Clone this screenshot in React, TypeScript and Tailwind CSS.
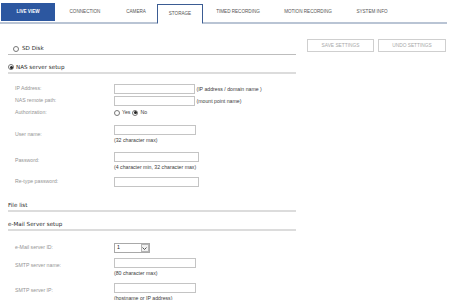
import React from 'react'

const tabs = [
  { label: 'LIVE VIEW', w: 'w-[54px]' },
  { label: 'CONNECTION', w: 'w-[60px]' },
  { label: 'CAMERA', w: 'w-[42px]' },
  { label: 'STORAGE', w: 'w-[46px]' },
  { label: 'TIMED RECORDING', w: 'w-[70px]' },
  { label: 'MOTION RECORDING', w: 'w-[70px]' },
  { label: 'SYSTEM INFO', w: 'w-[58px]' },
]

function Radio({ checked }: { checked?: boolean }) {
  return (
    <span className="inline-flex w-[6px] h-[6px] rounded-full border border-[#777] bg-white items-center justify-center shrink-0">
      {checked && <span className="w-[3px] h-[3px] rounded-full bg-[#222]" />}
    </span>
  )
}

function Input({ w = 'w-[81px]' }: { w?: string }) {
  return <div className={`${w} h-[10px] border border-[#c4c4c4] bg-white shrink-0`} />
}

function Label({ children }: { children: React.ReactNode }) {
  return <div className="w-[99px] shrink-0 text-[5.2px] text-[#959595]">{children}</div>
}

function Note({ children }: { children: React.ReactNode }) {
  return <div className="text-[5.2px] leading-[7px] text-[#3c3c3c] whitespace-nowrap">{children}</div>
}

function SectionHead({ children, thick }: { children: React.ReactNode; thick?: boolean }) {
  return (
    <div
      className={`flex items-center gap-[2px] h-[12px] text-[5.6px] font-['DejaVu_Sans',Verdana,sans-serif] text-[#2a2a2a] ${
        thick ? 'border-b-2 border-[#dcdcdc]' : 'border-b border-[#bdbdbd]'
      }`}
    >
      {children}
    </div>
  )
}

export default function App() {
  return (
    <div className="w-[450px] h-[300px] overflow-hidden bg-white font-['Liberation_Sans',Arial,sans-serif]">
      {/* Tab bar */}
      <div className="flex items-end h-[24px] pl-[1px] border-b-2 border-[#b9c4d4] mr-[3px]">
        {tabs.map((t) => {
          const active = t.label === 'LIVE VIEW'
          const current = t.label === 'STORAGE'
          return (
            <div
              key={t.label}
              className={`${t.w} flex items-center justify-center text-[4.6px] whitespace-nowrap ${
                active
                  ? 'h-[18px] mb-[1px] bg-[#2c57a0] text-white font-bold'
                  : current
                  ? 'h-[20px] -mb-[2px] bg-white border border-[#3b5c93] border-b-white text-[#555]'
                  : 'h-[18px] mb-[1px] text-[#555]'
              }`}
            >
              {t.label}
            </div>
          )
        })}
      </div>

      <div className="flex">
        {/* Left column */}
        <div className="w-[288px] ml-[8px] mt-[19px]">
          <SectionHead>
            <span className="ml-[3px]" />
            <Radio />
            <span className="ml-[1px]">SD Disk</span>
          </SectionHead>
          <div className="h-[7px]" />
          <SectionHead thick>
            <Radio checked />
            <span>NAS server setup</span>
          </SectionHead>

          <div className="pl-[7px] mt-[9px]">
            <div className="flex items-center h-[12px]">
              <Label>IP Address:</Label>
              <Input />
              <Note>&nbsp;(IP address / domain name )</Note>
            </div>
            <div className="flex items-center h-[12px]">
              <Label>NAS remote path:</Label>
              <Input />
              <Note>&nbsp;(mount point name)</Note>
            </div>
            <div className="flex items-center h-[12px]">
              <Label>Authorization:</Label>
              <div className="flex items-center gap-[2px] text-[5.2px] text-[#3c3c3c]">
                <Radio />
                <span>Yes</span>
                <Radio checked />
                <span>No</span>
              </div>
            </div>
            <div className="flex items-center h-[25px] mt-[3px]">
              <Label>User name:</Label>
              <div className="flex flex-col gap-[2px]">
                <Input w="w-[82px]" />
                <Note>(32 character max)</Note>
              </div>
            </div>
            <div className="flex items-center h-[24px] mt-[2px]">
              <Label>Password:</Label>
              <div className="flex flex-col gap-[2px]">
                <Input w="w-[85px]" />
                <Note>(4 character min, 32 character max)</Note>
              </div>
            </div>
            <div className="flex items-center h-[12px] mt-[3px]">
              <Label>Re-type password:</Label>
              <Input w="w-[85px]" />
            </div>
          </div>

          <div className="h-[12px]" />
          <SectionHead thick>
            <span>File list</span>
          </SectionHead>
          <div className="h-[7px]" />
          <SectionHead thick>
            <span>e-Mail Server setup</span>
          </SectionHead>

          <div className="pl-[7px] mt-[11px]">
            <div className="flex items-center h-[12px]">
              <Label>e-Mail server ID:</Label>
              <div className="flex items-center w-[36px] h-[10px] border border-[#a9a9a9] bg-white text-[5.2px] text-[#222]">
                <span className="flex-1 pl-[2px]">1</span>
                <span className="w-[8px] h-[8px] mr-[0.5px] border border-[#b5b5b5] bg-[#f1f1f1] flex items-center justify-center">
                  <svg width="5" height="3" viewBox="0 0 5 3">
                    <path d="M0.5 0.5 L2.5 2.5 L4.5 0.5" fill="none" stroke="#444" strokeWidth="0.9" />
                  </svg>
                </span>
              </div>
            </div>
            <div className="flex items-center h-[24px]">
              <Label>SMTP server name:</Label>
              <div className="flex flex-col gap-[2px] pt-[3px]">
                <Input w="w-[82px]" />
                <Note>(80 character max)</Note>
              </div>
            </div>
            <div className="flex items-center h-[24px] mt-[1px]">
              <Label>SMTP server IP:</Label>
              <div className="flex flex-col gap-[2px] pt-[3px]">
                <Input w="w-[82px]" />
                <Note>(hostname or IP address)</Note>
              </div>
            </div>
          </div>
        </div>

        {/* Right column: buttons */}
        <div className="flex-1 flex justify-end gap-[4px] mt-[15px] mr-[4px]">
          <div className="w-[67px] h-[13px] border border-[#cfcfcf] flex items-center justify-center text-[4.8px] text-[#a8a8a8]">
            SAVE SETTINGS
          </div>
          <div className="w-[68px] h-[13px] border border-[#cfcfcf] flex items-center justify-center text-[4.8px] text-[#a8a8a8]">
            UNDO SETTINGS
          </div>
        </div>
      </div>
    </div>
  )
}
